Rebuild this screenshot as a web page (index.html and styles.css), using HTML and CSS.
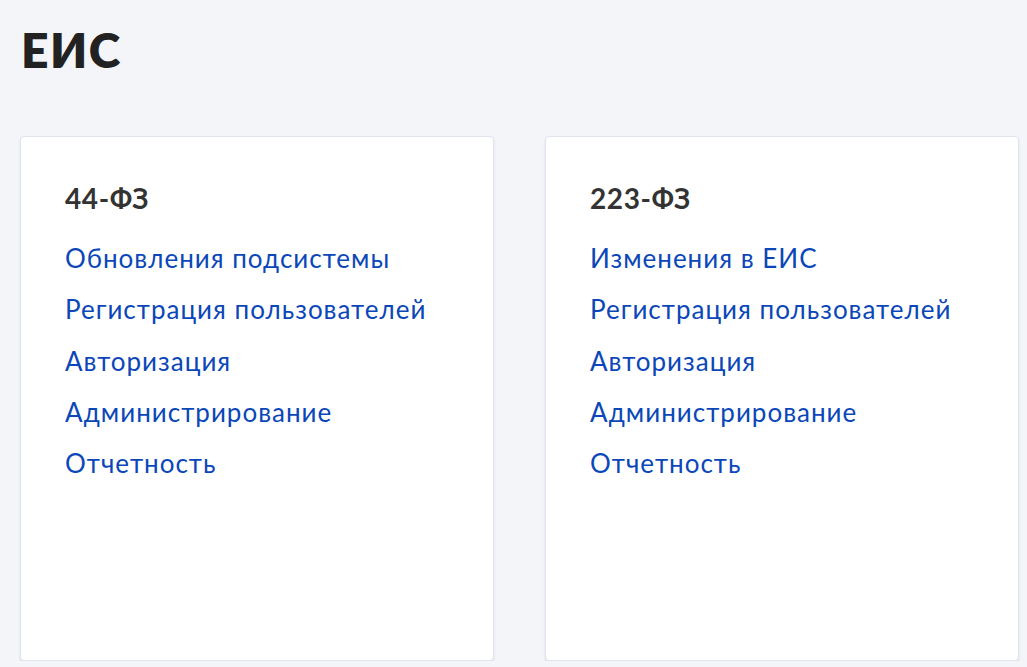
FILE: index.html
```html
<!DOCTYPE html>
<html lang="ru">
<head>
<meta charset="utf-8">
<title>ЕИС</title>
<link rel="stylesheet" href="styles.css">
</head>
<body>
<main class="page">
  <h1 class="title">ЕИС</h1>
  <div class="cards">
    <section class="card">
      <h2 class="card-title">44-ФЗ</h2>
      <ul class="links">
        <li><a href="#">Обновления подсистемы</a></li>
        <li><a href="#">Регистрация пользователей</a></li>
        <li><a href="#">Авторизация</a></li>
        <li><a href="#">Администрирование</a></li>
        <li><a href="#">Отчетность</a></li>
      </ul>
    </section>
    <section class="card">
      <h2 class="card-title">223-ФЗ</h2>
      <ul class="links">
        <li><a href="#">Изменения в ЕИС</a></li>
        <li><a href="#">Регистрация пользователей</a></li>
        <li><a href="#">Авторизация</a></li>
        <li><a href="#">Администрирование</a></li>
        <li><a href="#">Отчетность</a></li>
      </ul>
    </section>
  </div>
</main>
</body>
</html>
```

FILE: styles.css
```css
html, body {
  margin: 0;
  padding: 0;
  background: #f4f5f9;
  font-family: Lato, "Open Sans", "Liberation Sans", sans-serif;
}
.page {
  padding: 22px 9px 0 20px;
}
.title {
  margin: 0 0 0 1px;
  font-size: 48px;
  line-height: 56px;
  font-weight: 800;
  color: #222222;
  letter-spacing: 1.5px;
}
.cards {
  margin-top: 58px;
  display: grid;
  grid-template-columns: 474px 474px;
  column-gap: 51px;
}
.card {
  background: #ffffff;
  border: 1px solid #dfe4ee;
  border-radius: 4px;
  box-shadow: 0 2px 2px rgba(190, 200, 220, 0.5);
  height: 525px;
  padding: 43px 20px 0 44px;
  box-sizing: border-box;
}
.card-title {
  margin: 0;
  font-size: 28px;
  line-height: 36px;
  font-weight: 700;
  color: #333333;
  letter-spacing: 0.6px;
}
.links {
  list-style: none;
  margin: 27px 0 0;
  padding: 0;
}
.links li {
  height: 51.3px;
}
.links a {
  font-size: 26px;
  line-height: 30px;
  color: #0b47b8;
  text-decoration: none;
  letter-spacing: 1px;
}
```
